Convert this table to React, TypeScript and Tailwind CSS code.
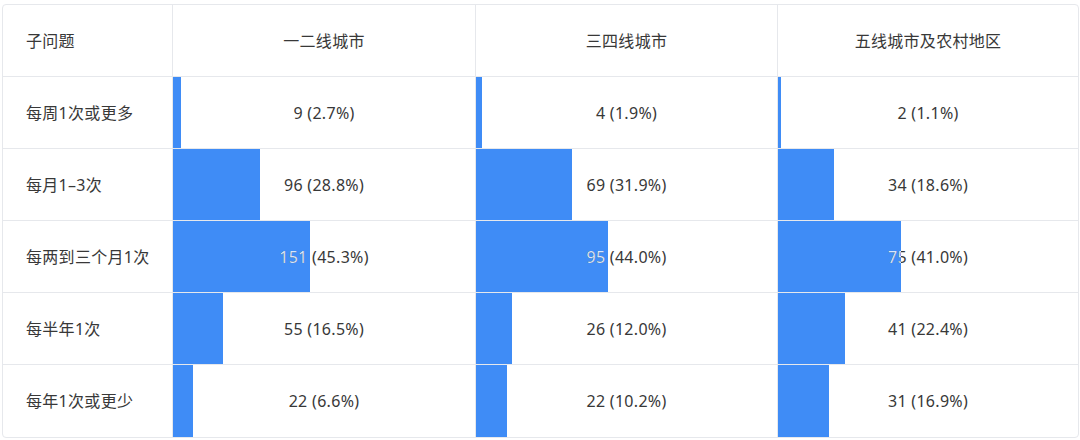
import React from "react";

type Cell = { n: number; pct: number };
const cols = ["一二线城市", "三四线城市", "五线城市及农村地区"];
const rows: { label: string; cells: Cell[] }[] = [
  { label: "每周1次或更多", cells: [{ n: 9, pct: 2.7 }, { n: 4, pct: 1.9 }, { n: 2, pct: 1.1 }] },
  { label: "每月1–3次", cells: [{ n: 96, pct: 28.8 }, { n: 69, pct: 31.9 }, { n: 34, pct: 18.6 }] },
  { label: "每两到三个月1次", cells: [{ n: 151, pct: 45.3 }, { n: 95, pct: 44.0 }, { n: 75, pct: 41.0 }] },
  { label: "每半年1次", cells: [{ n: 55, pct: 16.5 }, { n: 26, pct: 12.0 }, { n: 41, pct: 22.4 }] },
  { label: "每年1次或更少", cells: [{ n: 22, pct: 6.6 }, { n: 22, pct: 10.2 }, { n: 31, pct: 16.9 }] },
];

function DataCell({ c, last }: { c: Cell; last: boolean }) {
  const text = `${c.n} (${c.pct.toFixed(1)}%)`;
  return (
    <div className={`relative h-[72px] border-l border-[#e6e8ec] ${last ? "" : "border-b"}`}>
      <div className="absolute left-0 top-0 bottom-0 bg-[#3f8cf6]" style={{ width: `${c.pct}%` }} />
      <div className="absolute inset-0 flex items-center justify-center text-[16px] tracking-[0.3px] text-[#383838]">
        {text}
      </div>
      <div
        className="absolute inset-0 flex items-center justify-center text-[16px] tracking-[0.3px] text-[#d6e6fd]"
        style={{ clipPath: `inset(0 ${100 - c.pct}% 0 0)` }}
      >
        {text}
      </div>
    </div>
  );
}

export default function App() {
  return (
    <div
      className="w-[1080px] h-[440px] bg-white pt-[4px] pl-[2px]"
      style={{ fontFamily: '"Noto Sans", "Noto Sans CJK SC", sans-serif' }}
    >
      <div className="w-[1077px] rounded-[4px] border border-[#e6e8ec] overflow-hidden">
        <div className="grid grid-cols-[169px_303px_302px_1fr]">
          <div className="h-[72px] border-b border-[#e6e8ec] flex items-center pl-[23px] text-[16px] tracking-[0.3px] text-[#383838]">
            子问题
          </div>
          {cols.map((c) => (
            <div
              key={c}
              className="h-[72px] border-b border-l border-[#e6e8ec] flex items-center justify-center text-[16px] tracking-[0.3px] text-[#383838]"
            >
              {c}
            </div>
          ))}
          {rows.map((r, i) => {
            const last = i === rows.length - 1;
            return (
              <React.Fragment key={r.label}>
                <div
                  className={`h-[72px] border-[#e6e8ec] ${last ? "" : "border-b"} flex items-center pl-[23px] text-[16px] tracking-[0.3px] text-[#383838]`}
                >
                  {r.label}
                </div>
                {r.cells.map((c, j) => (
                  <DataCell key={j} c={c} last={last} />
                ))}
              </React.Fragment>
            );
          })}
        </div>
      </div>
    </div>
  );
}
